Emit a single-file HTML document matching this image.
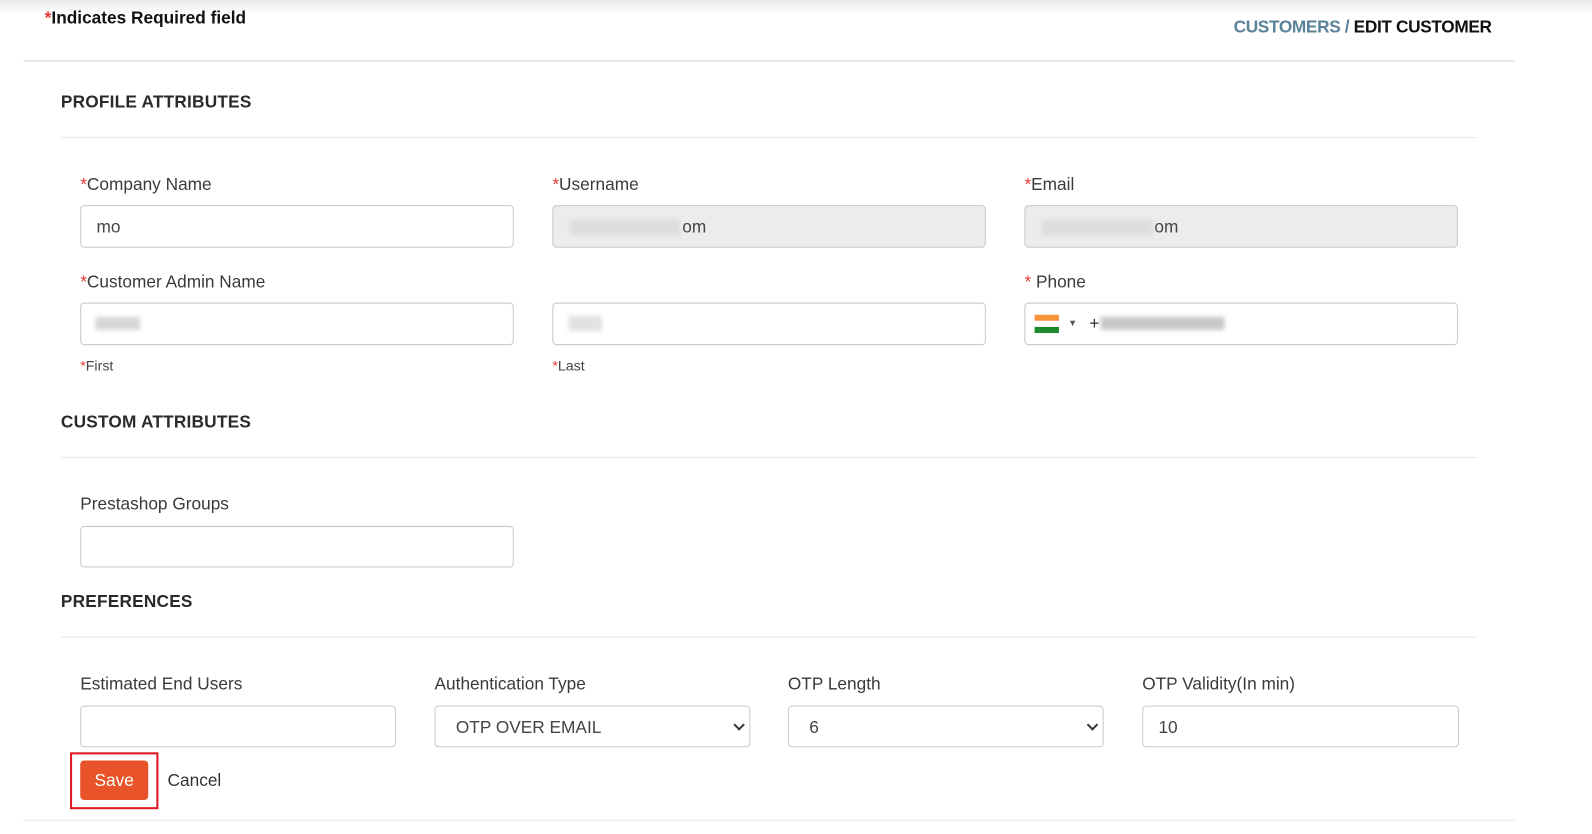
<!DOCTYPE html>
<html><head><style>
*{margin:0;padding:0;box-sizing:border-box}
body{width:1592px;height:833px;background:#fff;position:relative;overflow:hidden;font-family:"Liberation Sans",sans-serif;color:#333}
#w{position:absolute;left:0;top:0;width:1568px;height:821px;transform:scale(1.0153);transform-origin:0 0}
.a{position:absolute}
.top{left:0;top:0;width:1568px;height:14px;background:linear-gradient(#e9e9e9,#fff)}
.hl{position:absolute;height:1px;background:#e8e8e8}
.h{position:absolute;font-size:17px;font-weight:bold;color:#2a2a2a;letter-spacing:0.2px}
.lb{position:absolute;font-size:17px;color:#3a3a3a}
.r{color:#e53935}
.in{position:absolute;border:1px solid #c8c8c8;border-radius:4px;height:42px;background:#fff;font-size:17px;color:#444;padding:11px 0 0 15px}
.dis{background:#ececec}
.sm{position:absolute;font-size:14px;color:#444}
.blur{position:absolute;background:#d6d6d6;filter:blur(2px)}
.chev{position:absolute;right:6px;top:14px;width:8px;height:8px;border-right:2px solid #333;border-bottom:2px solid #333;transform:rotate(45deg)}
</style></head><body><div id="w">
<div class="a top"></div>
<div class="a" style="left:44px;top:8px;font-size:17px;font-weight:bold;color:#111"><span class="r">*</span>Indicates Required field</div>
<div class="a" style="left:1215px;top:17px;font-size:17px;font-weight:bold;color:#5a8299;letter-spacing:-0.35px">CUSTOMERS / <span style="color:#111">EDIT CUSTOMER</span></div>
<div class="hl" style="left:23px;top:59px;width:1469px;height:2px"></div>
<div class="h" style="left:60px;top:91px">PROFILE ATTRIBUTES</div>
<div class="hl" style="left:60px;top:135px;width:1395px"></div>
<div class="lb" style="left:79px;top:172px"><span class="r">*</span>Company Name</div>
<div class="lb" style="left:544px;top:172px"><span class="r">*</span>Username</div>
<div class="lb" style="left:1009px;top:172px"><span class="r">*</span>Email</div>
<div class="in" style="left:79px;top:202px;width:427px">mo</div>
<div class="in dis" style="left:544px;top:202px;width:427px"><span style="padding-left:112px">om</span></div>
<div class="blur" style="left:562px;top:216px;width:108px;height:16px;background:#ddd"></div>
<div class="in dis" style="left:1009px;top:202px;width:427px"><span style="padding-left:112px">om</span></div>
<div class="blur" style="left:1026px;top:216px;width:110px;height:16px;background:#ddd"></div>
<div class="lb" style="left:79px;top:268px"><span class="r">*</span>Customer Admin Name</div>
<div class="lb" style="left:1009px;top:268px"><span class="r">*</span> Phone</div>
<div class="in" style="left:79px;top:298px;width:427px"></div>
<div class="blur" style="left:94px;top:312px;width:44px;height:13px"></div>
<div class="in" style="left:544px;top:298px;width:427px"></div>
<div class="blur" style="left:560px;top:311px;width:33px;height:15px;background:#e2e2e2"></div>
<div class="in" style="left:1009px;top:298px;width:427px"></div>
<div class="a" style="left:1019px;top:310px;width:24px;height:18px"><div style="height:6px;background:#f7943a"></div><div style="height:6px;background:#fff"></div><div style="height:6px;background:#1e8a2e"></div></div>
<div class="a" style="left:1052px;top:313px;font-size:9px;color:#555">▼</div>
<div class="a" style="left:1073px;top:309px;font-size:17px">+</div>
<div class="blur" style="left:1084px;top:312px;width:122px;height:13px;background:#c8c8c8"></div>
<div class="sm" style="left:79px;top:352px"><span class="r">*</span>First</div>
<div class="sm" style="left:544px;top:352px"><span class="r">*</span>Last</div>
<div class="h" style="left:60px;top:406px">CUSTOM ATTRIBUTES</div>
<div class="hl" style="left:60px;top:450px;width:1395px"></div>
<div class="lb" style="left:79px;top:487px">Prestashop Groups</div>
<div class="in" style="left:79px;top:518px;width:427px;height:41px"></div>
<div class="h" style="left:60px;top:583px">PREFERENCES</div>
<div class="hl" style="left:60px;top:627px;width:1395px"></div>
<div class="lb" style="left:79px;top:664px">Estimated End Users</div>
<div class="lb" style="left:428px;top:664px">Authentication Type</div>
<div class="lb" style="left:776px;top:664px">OTP Length</div>
<div class="lb" style="left:1125px;top:664px">OTP Validity(In min)</div>
<div class="in" style="left:79px;top:695px;width:311px;height:41px"></div>
<div class="in" style="left:428px;top:695px;width:311px;height:41px;padding-left:20px">OTP OVER EMAIL<div class="chev"></div></div>
<div class="in" style="left:776px;top:695px;width:311px;height:41px;padding-left:20px">6<div class="chev"></div></div>
<div class="in" style="left:1125px;top:695px;width:312px;height:41px">10</div>
<div class="a" style="left:69px;top:741px;width:87px;height:56px;border:2px solid #e0141e"></div>
<div class="a" style="left:79px;top:749px;width:67px;height:39px;background:#e8532a;border-radius:4px;color:#fff;font-size:17px;text-align:center;line-height:39px">Save</div>
<div class="a" style="left:165px;top:759px;font-size:17px;color:#333">Cancel</div>
<div class="hl" style="left:23px;top:807px;width:1469px;height:2px;background:#f0f0f0"></div>
</div></body></html>
